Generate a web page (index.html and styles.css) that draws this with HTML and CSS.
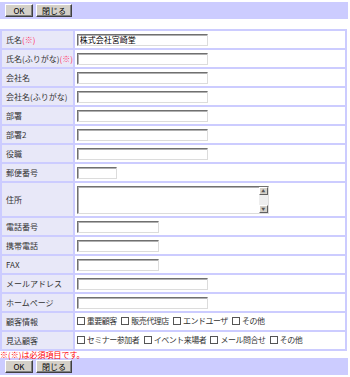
FILE: index.html
```html
<!DOCTYPE html>
<html lang="ja">
<head>
    <meta charset="UTF-8">
    <title>顧客登録</title>
    <link rel="stylesheet" href="styles.css">
</head>
<body>

    <div class="bar bar-top">
        <button class="btn btn-ok">OK</button>
        <button class="btn btn-close">閉じる</button>
    </div>

    <table class="form">
        <tr><th>氏名<span class="req">(※)</span></th><td><input class="txt long" value="株式会社宮崎堂"></td></tr>
        <tr><th>氏名(ふりがな)<span class="req">(※)</span></th><td><input class="txt long"></td></tr>
        <tr><th>会社名</th><td><input class="txt long"></td></tr>
        <tr><th>会社名(ふりがな)</th><td><input class="txt long"></td></tr>
        <tr><th>部署</th><td><input class="txt long"></td></tr>
        <tr><th>部署2</th><td><input class="txt long"></td></tr>
        <tr><th>役職</th><td><input class="txt long"></td></tr>
        <tr><th>郵便番号</th><td><input class="txt zip"></td></tr>
        <tr class="row-tall">
            <th>住所</th>
            <td>
                <div class="area">
                    <textarea class="area-text"></textarea>
                    <div class="scroll">
                        <span class="arrow">▲</span>
                        <span class="track"></span>
                        <span class="arrow">▼</span>
                    </div>
                </div>
            </td>
        </tr>
        <tr><th>電話番号</th><td><input class="txt mid"></td></tr>
        <tr><th>携帯電話</th><td><input class="txt mid"></td></tr>
        <tr><th>FAX</th><td><input class="txt mid"></td></tr>
        <tr><th>メールアドレス</th><td><input class="txt long"></td></tr>
        <tr><th>ホームページ</th><td><input class="txt long"></td></tr>
        <tr>
            <th>顧客情報</th>
            <td class="checks">
                <label><input type="checkbox" class="chk">重要顧客</label>
                <label><input type="checkbox" class="chk">販売代理店</label>
                <label><input type="checkbox" class="chk">エンドユーザ</label>
                <label><input type="checkbox" class="chk">その他</label>
            </td>
        </tr>
        <tr>
            <th>見込顧客</th>
            <td class="checks">
                <label><input type="checkbox" class="chk">セミナー参加者</label>
                <label><input type="checkbox" class="chk">イベント来場者</label>
                <label><input type="checkbox" class="chk">メール問合せ</label>
                <label><input type="checkbox" class="chk">その他</label>
            </td>
        </tr>
    </table>

    <p class="note">※(※)は必須項目です。</p>

    <div class="bar bar-bottom">
        <button class="btn btn-ok">OK</button>
        <button class="btn btn-close">閉じる</button>
    </div>

</body>
</html>
```

FILE: styles.css
```css
body {
    margin: 0;
    background-color: #ffffff;
    color: #333333;
    font-family: "Noto Sans CJK JP", "Liberation Sans", sans-serif;
    font-size: 8px;
}

.bar {
    width: 348px;
    height: 17px;
    background-color: #ccccff;
    display: flex;
    align-items: center;
    gap: 3px;
    padding-left: 5px;
    box-sizing: border-box;
}

.bar-top {
    margin-top: 2px;
}

.btn {
    height: 13px;
    padding: 0;
    background-color: #d4d0c8;
    border: 1px solid;
    border-color: #ffffff #404040 #404040 #ffffff;
    box-shadow: inset -1px -1px 0 #808080;
    font-family: inherit;
    font-size: 8px;
    line-height: 11px;
    color: #000000;
}

.btn-ok {
    width: 28px;
}

.btn-close {
    width: 36px;
}

.form {
    margin-top: 10px;
    width: 347px;
    border-collapse: separate;
    border-spacing: 0;
    border: 1px solid #ccccff;
}

.form th,
.form td {
    height: 17px;
    padding: 0;
    border: 1px solid #ccccff;
    text-align: left;
    vertical-align: middle;
    line-height: 10px;
}

.form th {
    width: 66px;
    padding-left: 4px;
    background-color: #e8e8f8;
    font-weight: normal;
    white-space: nowrap;
}

.form td {
    padding-left: 2px;
}

.form .row-tall th,
.form .row-tall td {
    height: 33px;
}

.req {
    color: #ff3366;
}

.txt {
    display: block;
    height: 12px;
    padding: 0 2px;
    box-sizing: border-box;
    border: 1px solid;
    border-color: #707070 #dcdcdc #dcdcdc #707070;
    box-shadow: inset 1px 1px 0 #b0b0b0;
    font-family: inherit;
    font-size: 8px;
    color: #000000;
    outline: none;
}

.long {
    width: 131px;
}

.mid {
    width: 82px;
}

.zip {
    width: 40px;
}

.area {
    display: flex;
    width: 192px;
    height: 28px;
    box-sizing: border-box;
    border: 1px solid;
    border-color: #707070 #dcdcdc #dcdcdc #707070;
    box-shadow: inset 1px 1px 0 #b0b0b0;
}

.area-text {
    flex: 1;
    border: none;
    resize: none;
    background: transparent;
    outline: none;
}

.scroll {
    width: 9px;
    display: flex;
    flex-direction: column;
    background-color: #eeeeee;
}

.arrow {
    height: 8px;
    background-color: #d4d0c8;
    border: 1px solid;
    border-color: #ffffff #606060 #606060 #ffffff;
    box-sizing: border-box;
    font-size: 4px;
    line-height: 6px;
    text-align: center;
    color: #555555;
}

.track {
    flex: 1;
}

.checks {
    white-space: nowrap;
    letter-spacing: -0.5px;
}

.checks label {
    display: inline-flex;
    align-items: center;
    margin-right: 3px;
}

.chk {
    appearance: none;
    -webkit-appearance: none;
    width: 8px;
    height: 8px;
    margin: 0 2px 0 0;
    border: 1px solid #555555;
    background-color: #ffffff;
}

.note {
    margin: 0;
    height: 7px;
    line-height: 7px;
    color: #ff0000;
}
```
